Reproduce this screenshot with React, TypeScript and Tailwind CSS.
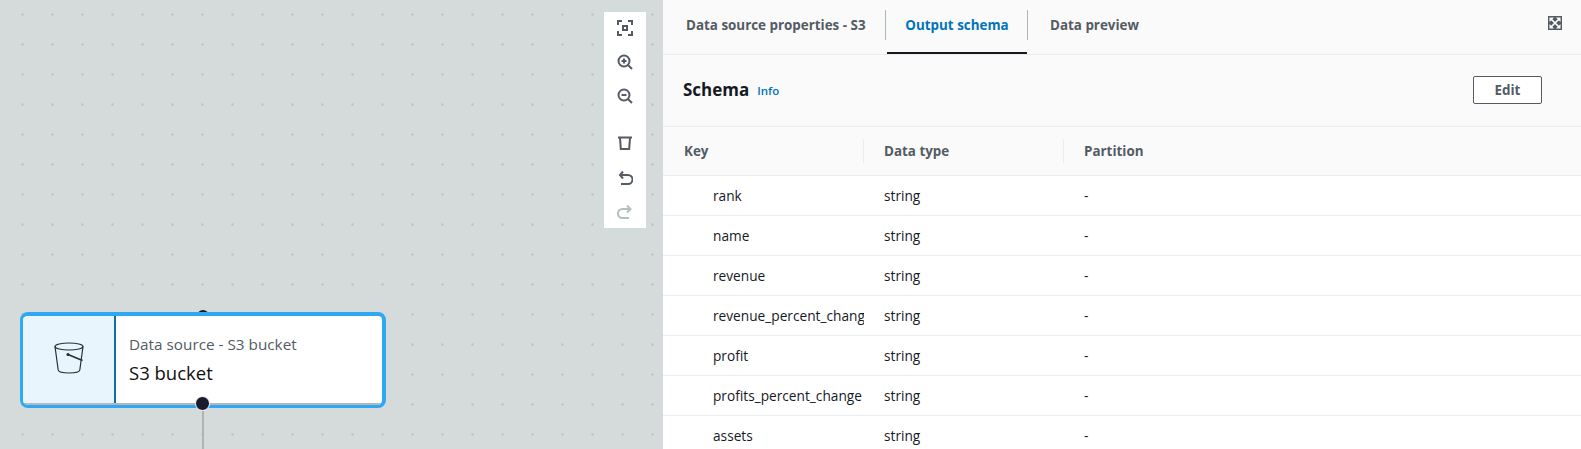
import React from "react";

const rows = [
    "rank",
    "name",
    "revenue",
    "revenue_percent_change",
    "profit",
    "profits_percent_change",
    "assets",
];

function ToolIcon({ children, muted, className }: { children: React.ReactNode; muted?: boolean; className?: string }) {
    return (
        <svg
            viewBox="0 0 16 16"
            fill="none"
            strokeWidth="2"
            className={`h-4 w-4 shrink-0 ${muted ? "stroke-[#b4bfc0]" : "stroke-[#545b64]"} ${className ?? ""}`}
        >
            {children}
        </svg>
    );
}

function Toolbar() {
    return (
        <div className="absolute left-[604px] top-[12px] flex h-[216px] w-[42px] flex-col items-center bg-white pt-[8px]">
            <ToolIcon>
                <path d="M1 5V1h4M11 1h4v4M15 11v4h-4M5 15H1v-4" />
                <rect x="6" y="6" width="4" height="4" />
            </ToolIcon>
            <ToolIcon className="mt-[18px]">
                <circle cx="7" cy="7" r="5.500" />
                <path d="M11 11l4 4M4.500 7h5M7 4.500v5" />
            </ToolIcon>
            <ToolIcon className="mt-[18px]">
                <circle cx="7" cy="7" r="5.500" />
                <path d="M11 11l4 4M4.500 7h5" />
            </ToolIcon>
            <ToolIcon className="mt-[31px]">
                <path d="M1 2.500h14M3 2.500l.8 11.500h8.400l.8-11.500" />
            </ToolIcon>
            <ToolIcon className="mt-[19px]">
                <path d="M6 1.500L3 5l3 3.500M3 5h8a4 4 0 0 1 0 9H4" />
            </ToolIcon>
            <ToolIcon muted className="mt-[18px]">
                <path d="M10 1.500L13.500 5 10 8.500M13 5H5.500a4 4 0 0 0 0 9H12" />
            </ToolIcon>
        </div>
    );
}

function NodeCard() {
    return (
        <>
            <div className="absolute left-[197px] top-[310px] h-[12px] w-[12px] rounded-full bg-[#16191f]" />
            <div className="absolute left-[20px] top-[312px] h-[96px] w-[366px] overflow-hidden rounded-[8px] border-[3px] border-t-[4px] border-r-[4px] border-[#2ea8f2] bg-white">
                <div className="flex h-full border-b-2 border-[#b5b8bb]">
                    <div className="flex h-full w-[93px] items-center justify-center border-r-2 border-[#0f6cad] bg-[#e8f5fd] pb-[4px] pl-[1px]">
                        <svg viewBox="0 0 30 32" fill="none" stroke="#232f3e" strokeWidth="1.200" className="h-[32px] w-[30px]">
                            <ellipse cx="15" cy="4.500" rx="14" ry="3.500" />
                            <path d="M1 4.500l3.200 23.500c.3 2 4.600 3 10.800 3s10.500-1 10.800-3L29 4.500" />
                            <path d="M14 12.500l14.500 6" strokeWidth="1.500" />
                            <circle cx="14" cy="12.500" r="1" fill="#232f3e" />
                        </svg>
                    </div>
                    <div className="flex flex-1 flex-col justify-center pb-[2px] pl-[13px]">
                        <div className="text-[15.300px] leading-[20px] text-[#545b64]">Data source - S3 bucket</div>
                        <div className="mt-[8px] text-[18.500px] leading-[22px] text-[#0f1111]">S3 bucket</div>
                    </div>
                </div>
            </div>
            <div className="absolute left-[195px] top-[396px] h-[15px] w-[15px] rounded-full border border-white bg-[#1b1b2f]" />
            <div className="absolute left-[202px] top-[411px] h-[38px] w-[2px] bg-[#b0b4b7]" />
        </>
    );
}

function Canvas() {
    return (
        <div className="relative h-full w-[663px] shrink-0 overflow-hidden bg-[#d5dbdb] bg-[radial-gradient(#8f9698_0,transparent_1.200px)] bg-[length:30px_30px] bg-[position:7.500px_-0.500px]">
            <Toolbar />
            <NodeCard />
        </div>
    );
}

function Tabs() {
    return (
        <div className="flex h-[55px] items-stretch border-b border-[#eaeded] pl-[23px] text-[13.400px] font-bold text-[#545b64]">
            <div className="flex w-[199px] items-center pb-[3px]">Data source properties - S3</div>
            <div className="mt-[10px] h-[30px] w-px bg-[#aab7b8]" />
            <div className="ml-[1px] flex h-[54px] w-[140px] items-center justify-center border-b-2 border-[#16191f] pb-[1px] text-[#0073bb]">
                Output schema
            </div>
            <div className="mt-[10px] h-[30px] w-px bg-[#aab7b8]" />
            <div className="ml-[22px] flex items-center pb-[3px]">Data preview</div>
            <div className="ml-auto mr-[19px] mt-[16px]">
                <svg viewBox="0 0 14 14" className="h-[14px] w-[14px]">
                    <rect width="14" height="14" fill="#545b64" />
                    <path d="M3 3l8 8M11 3l-8 8" stroke="#fff" strokeWidth="1.700" />
                    <path d="M1.500 1.500h4.500L1.500 6zM12.500 1.500H8l4.500 4.500zM1.500 12.500H6L1.500 8zM12.500 12.500H8L12.500 8z" fill="#fff" />
                </svg>
            </div>
        </div>
    );
}

export default function App() {
    return (
        <div className="flex h-[449px] w-[1581px] overflow-hidden font-['Open_Sans','Noto_Sans',sans-serif]">
            <Canvas />
            <div className="min-w-0 flex-1 bg-[#fafafa]">
                <Tabs />
                <div className="flex h-[72px] items-center justify-between border-b border-[#eaeded] pl-[20px] pr-[39px]">
                    <div className="flex items-baseline pb-[1px]">
                        <span className="text-[17px] font-bold leading-[22px] text-[#16191f]">Schema</span>
                        <span className="ml-[8px] -translate-y-px text-[11.500px] font-semibold text-[#0073bb]">Info</span>
                    </div>
                    <button className="mb-[1px] h-[28px] w-[69px] rounded-[2px] border border-[#545b64] bg-white text-[13.400px] font-bold text-[#545b64]">
                        Edit
                    </button>
                </div>
                <div className="flex h-[49px] items-center border-b border-[#eaeded] text-[13.400px] font-bold text-[#545b64]">
                    <div className="flex h-[24px] w-[201px] items-center border-r border-[#eaeded] pl-[21px]">Key</div>
                    <div className="flex h-[24px] w-[200px] items-center border-r border-[#eaeded] pl-[20px]">Data type</div>
                    <div className="pl-[20px]">Partition</div>
                </div>
                <div className="bg-white">
                    {rows.map((name) => (
                        <div key={name} className="flex h-[40px] items-center border-b border-[#eaeded] pt-[2px] text-[13.700px] text-[#16191f]">
                            <div className="w-[201px] overflow-hidden whitespace-nowrap pl-[50px]">{name}</div>
                            <div className="w-[200px] pl-[20px]">string</div>
                            <div className="pl-[20px]">-</div>
                        </div>
                    ))}
                </div>
            </div>
        </div>
    );
}
